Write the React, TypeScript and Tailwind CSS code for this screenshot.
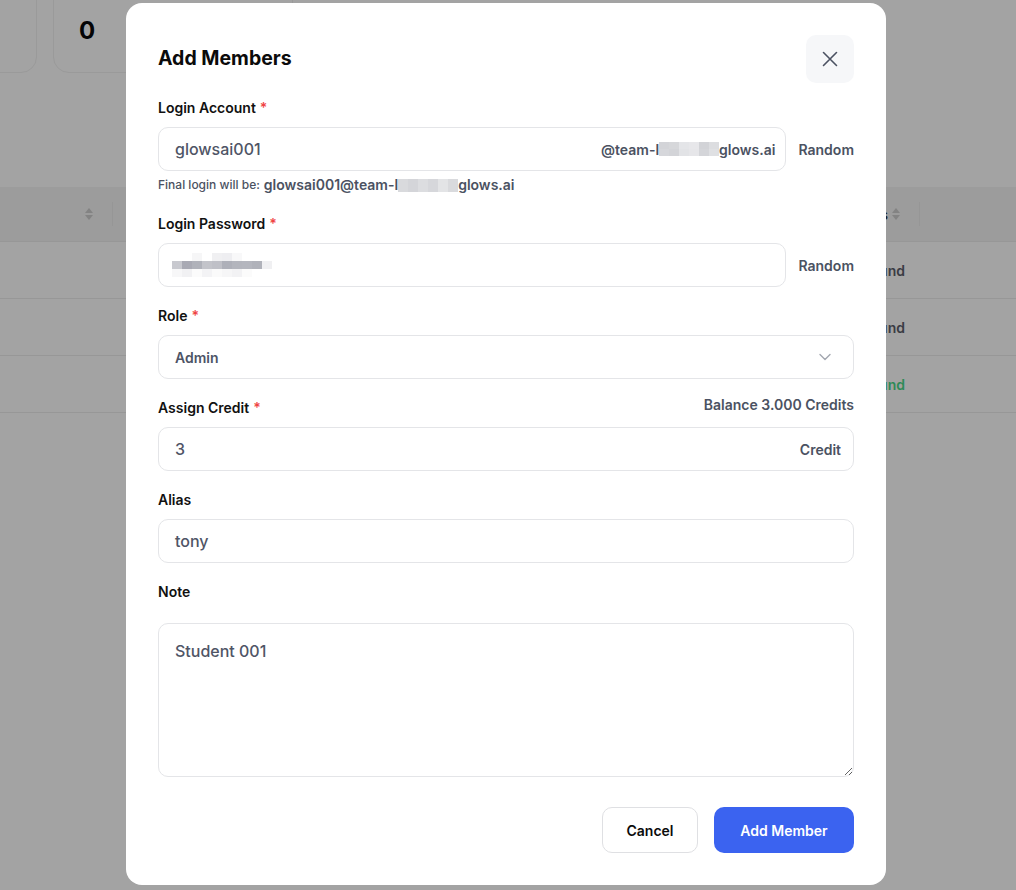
import React from "react";

const FONT = { fontFamily: "Inter, 'Noto Sans', sans-serif" };

function Req() {
  return <span className="ml-1 text-[#ef4444]">*</span>;
}

function Label({ children, req }: { children: React.ReactNode; req?: boolean }) {
  return (
    <div className="mb-2 text-[14px] font-semibold leading-[22px] text-[#111111]">
      {children}
      {req && <Req />}
    </div>
  );
}

function Pix({ cols, h }: { cols: string[][]; h: number }) {
  return (
    <span className="inline-flex flex-col align-middle">
      {cols.map((row, i) => (
        <span key={i} className="flex">
          {row.map((c, j) => (
            <span key={j} style={{ background: c, width: 10, height: h }} />
          ))}
        </span>
      ))}
    </span>
  );
}

function SortIcon() {
  return (
    <svg width="10" height="14" viewBox="0 0 10 14">
      <path d="M5 1 L9 6 H1 Z" fill="#838383" />
      <path d="M5 13 L9 8 H1 Z" fill="#838383" />
    </svg>
  );
}

export default function App() {
  const teamPix = [
    ["#d3d4d8", "#d6d7da", "#e4e5e8", "#e7e7ea", "#d2d3d7", "#dcdde0"],
    ["#d6d7db", "#d3d4d8", "#e2e3e6", "#e6e6e9", "#d4d5d9", "#dfe0e3"],
  ];
  const helpPix = [
    ["#d9dadd", "#d4d5d9", "#dcdde0", "#d6d7db", "#e3e4e6", "#d9dadd"],
  ];
  const pwPix = [
    ["#ffffff", "#ffffff", "#f6f6f7", "#ffffff", "#f0f0f2", "#eeeef1", "#f8f8f9", "#ffffff", "#ffffff", "#ffffff"],
    ["#c8c9cf", "#a9aab4", "#b0b2ba", "#c3c4ca", "#bfc0c7", "#aeb0b9", "#b3b5bd", "#b4b6be", "#b0b2ba", "#f0f0f2"],
    ["#f7f7f8", "#f1f1f3", "#fbfbfb", "#f3f3f5", "#fafafa", "#f6f6f7", "#f2f2f4", "#fbfbfb", "#ffffff", "#ffffff"],
  ];

  return (
    <div style={FONT} className="relative h-[890px] w-[1016px] overflow-hidden bg-[#a3a3a3]">
      {/* background page (dimmed) */}
      <div className="flex h-[73px] gap-4 -mt-[20px]">
        <div className="-ml-[40px] h-[93px] w-[77px] rounded-2xl border border-[#9a9a9a]" />
        <div className="h-[93px] w-[240px] rounded-2xl border border-[#9a9a9a] pl-[25px] pt-[30px] text-[24px] font-bold leading-[40px] text-[#050505]">
          0
        </div>
      </div>
      <div className="mt-[134px]">
        <div className="flex h-[55px] items-center border-b border-[#979797] bg-[#9c9c9c]">
          <div className="flex w-[112px] justify-end pr-[18px]">
            <SortIcon />
          </div>
          <div className="h-[24px] w-px bg-[#969696]" />
          <div className="flex-1" />
          <div className="flex items-center pr-[18px]">
            <span className="text-[14px] font-semibold text-[#1a1a1a]">Status</span>
            <span className="ml-[3px]">
              <SortIcon />
            </span>
          </div>
          <div className="mr-[96px] h-[24px] w-px bg-[#969696]" />
        </div>
        {["#3a3c43", "#3a3c43", "#2f8a57"].map((c, i) => (
          <div key={i} className="flex h-[57px] items-center border-b border-[#979797]">
            <div className="flex-1" />
            <span style={{ color: c }} className="mr-[111px] text-[14px] font-semibold">
              Bound
            </span>
          </div>
        ))}
      </div>

      {/* modal */}
      <div className="absolute left-[126px] top-[3px] flex w-[760px] flex-col rounded-2xl bg-white p-8">
        <div className="flex h-12 items-center justify-between">
          <h2 className="text-[19.5px] font-bold text-[#0b0b0b]">Add Members</h2>
          <button className="flex h-12 w-12 items-center justify-center rounded-[10px] bg-[#f6f7f9]">
            <svg width="18" height="18" viewBox="0 0 18 18" fill="none" stroke="#4b5262" strokeWidth="1.6" strokeLinecap="round">
              <path d="M2.5 2.5 L15.5 15.5 M15.5 2.5 L2.5 15.5" />
            </svg>
          </button>
        </div>

        <div className="mt-[14px] flex flex-col gap-[18px]">
          <div>
            <Label req>Login Account</Label>
            <div className="flex items-center gap-3">
              <div className="flex h-11 flex-1 items-center justify-between rounded-[10px] border border-[#e4e5e8] pl-4 pr-[10px]">
                <span className="text-[16px] font-medium text-[#4f5566]">glowsai001</span>
                <span className="flex items-center text-[14px] font-semibold text-[#4b5262]">
                  @team-l
                  <Pix cols={teamPix} h={7} />
                  glows.ai
                </span>
              </div>
              <span className="text-[14px] font-semibold text-[#4b5262]">Random</span>
            </div>
            <div className="mt-1 flex items-center leading-5">
              <span className="text-[12px] font-medium text-[#4b5262]">Final login will be:</span>
              <span className="ml-1 flex items-center text-[14px] font-semibold text-[#4b5262]">
                glowsai001@team-l
                <Pix cols={helpPix} h={13} />
                glows.ai
              </span>
            </div>
          </div>

          <div>
            <Label req>Login Password</Label>
            <div className="flex items-center gap-3">
              <div className="flex h-11 flex-1 items-center rounded-[10px] border border-[#e4e5e8] pl-[13px]">
                <Pix cols={pwPix} h={8} />
              </div>
              <span className="text-[14px] font-semibold text-[#4b5262]">Random</span>
            </div>
          </div>

          <div>
            <Label req>Role</Label>
            <div className="flex h-11 items-center justify-between rounded-[10px] border border-[#e4e5e8] pl-4 pr-[22px]">
              <span className="text-[14px] font-semibold text-[#4d5466]">Admin</span>
              <svg width="12" height="8" viewBox="0 0 12 8" fill="none" stroke="#a3a7b0" strokeWidth="1.4" strokeLinecap="round" strokeLinejoin="round">
                <path d="M1 1.5 L6 6.5 L11 1.5" />
              </svg>
            </div>
          </div>

          <div>
            <div className="flex items-start justify-between">
              <Label req>Assign Credit</Label>
              <span className="text-[14px] font-semibold leading-[16px] text-[#4b5262]">Balance 3.000 Credits</span>
            </div>
            <div className="flex h-11 items-center justify-between rounded-[10px] border border-[#e4e5e8] pl-4 pr-3">
              <span className="text-[16px] font-medium text-[#4f5566]">3</span>
              <span className="text-[14px] font-semibold text-[#4b5262]">Credit</span>
            </div>
          </div>

          <div>
            <Label>Alias</Label>
            <div className="flex h-11 items-center rounded-[10px] border border-[#e4e5e8] pl-4">
              <span className="text-[16px] font-medium text-[#4f5566]">tony</span>
            </div>
          </div>

          <div>
            <div className="mb-5 text-[14px] font-semibold leading-[22px] text-[#111111]">Note</div>
            <textarea
              defaultValue="Student 001"
              className="block h-[154px] w-full resize-y rounded-[10px] border border-[#e4e5e8] px-4 pt-[15px] text-[16px] font-medium leading-6 text-[#4f5566] outline-none"
            />
          </div>
        </div>

        <div className="mt-[30px] flex justify-end gap-4">
          <button className="h-[46px] w-[96px] rounded-[10px] border border-[#dfe0e3] bg-white text-[14px] font-semibold text-[#0b0b0b]">
            Cancel
          </button>
          <button className="h-[46px] w-[140px] rounded-[10px] bg-[#3b63f0] text-[14px] font-semibold text-white">
            Add Member
          </button>
        </div>
      </div>
    </div>
  );
}
